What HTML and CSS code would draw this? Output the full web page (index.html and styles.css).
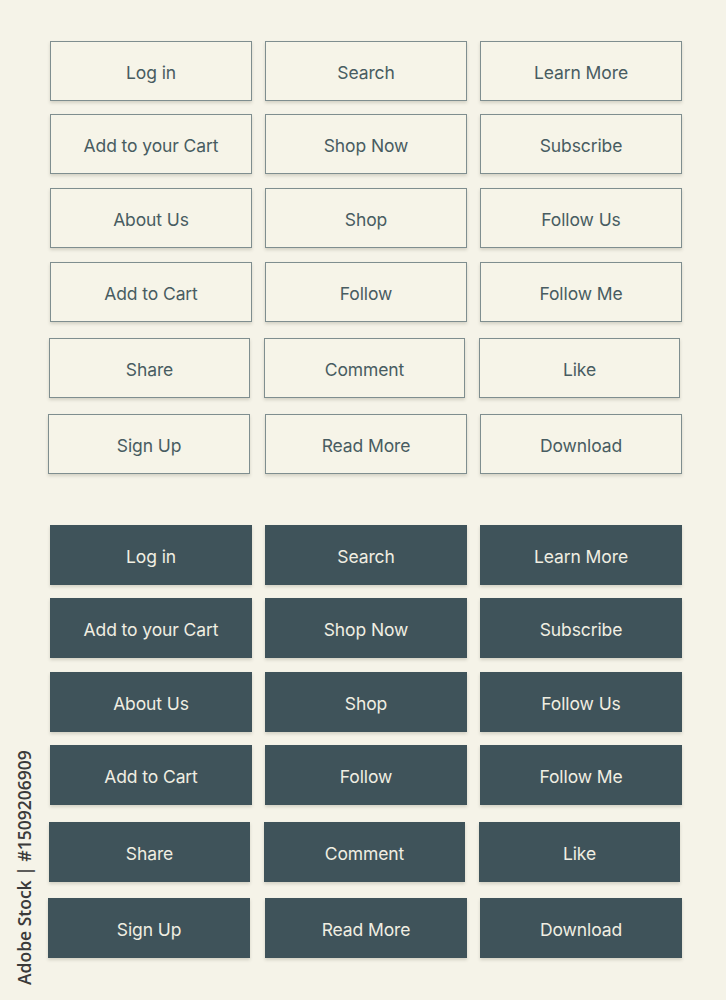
FILE: index.html
```html
<!DOCTYPE html>
<html>
<head>
<meta charset="utf-8">
<link rel="stylesheet" href="styles.css">
</head>
<body>
<main class="page">
  <section class="set outline">
    <div class="row"><a class="btn">Log in</a><a class="btn">Search</a><a class="btn">Learn More</a></div>
    <div class="row"><a class="btn">Add to your Cart</a><a class="btn">Shop Now</a><a class="btn">Subscribe</a></div>
    <div class="row r3"><a class="btn">About Us</a><a class="btn">Shop</a><a class="btn">Follow Us</a></div>
    <div class="row r3"><a class="btn">Add to Cart</a><a class="btn">Follow</a><a class="btn">Follow Me</a></div>
    <div class="row loose r5"><a class="btn">Share</a><a class="btn">Comment</a><a class="btn">Like</a></div>
    <div class="row loose r6"><a class="btn">Sign Up</a><a class="btn">Read More</a><a class="btn">Download</a></div>
  </section>
  <section class="set filled">
    <div class="row"><a class="btn">Log in</a><a class="btn">Search</a><a class="btn">Learn More</a></div>
    <div class="row"><a class="btn">Add to your Cart</a><a class="btn">Shop Now</a><a class="btn">Subscribe</a></div>
    <div class="row r3"><a class="btn">About Us</a><a class="btn">Shop</a><a class="btn">Follow Us</a></div>
    <div class="row"><a class="btn">Add to Cart</a><a class="btn">Follow</a><a class="btn">Follow Me</a></div>
    <div class="row loose2 r5"><a class="btn">Share</a><a class="btn">Comment</a><a class="btn">Like</a></div>
    <div class="row loose r6"><a class="btn">Sign Up</a><a class="btn">Read More</a><a class="btn">Download</a></div>
  </section>
</main>
<div class="credit">Adobe Stock | #1509206909</div>
</body>
</html>
```
FILE: styles.css
```css
html, body {
  margin: 0;
  padding: 0;
}
body {
  background: #f5f3e8;
  width: 726px;
  height: 1000px;
  overflow: hidden;
  font-family: Inter, "Liberation Sans", sans-serif;
  position: relative;
}
.page {
  padding: 41px 0 0 50px;
}
.set + .set {
  margin-top: 51px;
}
.row {
  display: flex;
  gap: 13px;
}
.row + .row {
  margin-top: 13px;
}
.row.r3 {
  margin-top: 14px;
}
.row.loose {
  margin-top: 16px;
}
.row.loose2 {
  margin-top: 17px;
}
.r5 {
  margin-left: -1px;
  gap: 14px;
}
.r5 .btn {
  width: 201px;
}
.r6 .btn:first-child {
  margin-left: -2px;
  margin-right: 2px;
}
.btn {
  box-sizing: border-box;
  width: 202px;
  height: 60px;
  padding-top: 3px;
  display: flex;
  align-items: center;
  justify-content: center;
  font-size: 17.5px;
  letter-spacing: -0.1px;
  text-decoration: none;
  box-shadow: 0 2px 3px rgba(60, 60, 40, 0.18);
}
.outline .btn {
  background: #f6f4e8;
  border: 1px solid #7f8e8f;
  color: #485c61;
}
.filled .btn {
  background: #3f535a;
  color: #f0eee2;
}
.credit {
  position: absolute;
  left: 12px;
  top: 750px;
  height: 236px;
  writing-mode: vertical-rl;
  transform: rotate(180deg);
  font-family: "Open Sans", "DejaVu Sans", sans-serif;
  font-weight: 600;
  font-size: 17.5px;
  color: #3a3a3a;
  text-align: center;
  white-space: nowrap;
}
```
